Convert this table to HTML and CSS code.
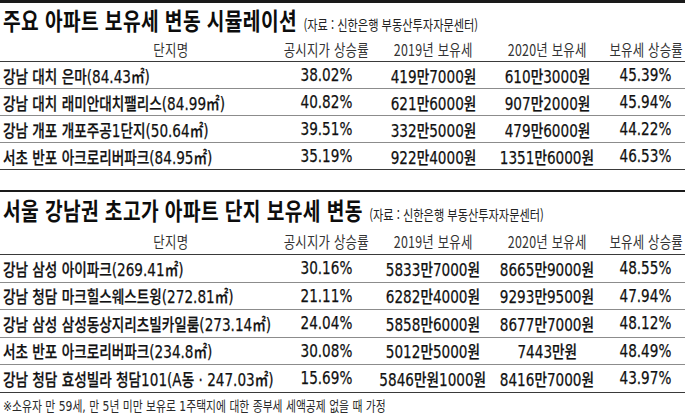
FILE: index.html
```html
<!DOCTYPE html>
<html lang="ko">
<head>
<meta charset="utf-8">
<title>보유세 변동</title>
<link rel="stylesheet" href="styles.css">
</head>
<body>
<div class="page">
  <section class="block block-first">
    <div class="title-row">
      <span class="tx"><h1 class="title">주요 아파트 보유세 변동 시뮬레이션</h1><span class="source">(자료 : 신한은행 부동산투자자문센터)</span></span>
    </div>
    <div class="table">
      <div class="row head">
        <div class="cell name-head"><span class="tx">단지명</span></div>
        <div class="cell"><span class="tx">공시지가 상승률</span></div>
        <div class="cell"><span class="tx">2019년 보유세</span></div>
        <div class="cell"><span class="tx">2020년 보유세</span></div>
        <div class="cell end"><span class="tx">보유세 상승률</span></div>
      </div>
      <div class="row">
        <div class="cell name"><span class="tx">강남 대치 은마(84.43㎡)</span></div>
        <div class="cell"><span class="tx">38.02%</span></div>
        <div class="cell"><span class="tx">419만7000원</span></div>
        <div class="cell"><span class="tx">610만3000원</span></div>
        <div class="cell"><span class="tx">45.39%</span></div>
      </div>
      <div class="row">
        <div class="cell name"><span class="tx">강남 대치 래미안대치팰리스(84.99㎡)</span></div>
        <div class="cell"><span class="tx">40.82%</span></div>
        <div class="cell"><span class="tx">621만6000원</span></div>
        <div class="cell"><span class="tx">907만2000원</span></div>
        <div class="cell"><span class="tx">45.94%</span></div>
      </div>
      <div class="row">
        <div class="cell name"><span class="tx">강남 개포 개포주공1단지(50.64㎡)</span></div>
        <div class="cell"><span class="tx">39.51%</span></div>
        <div class="cell"><span class="tx">332만5000원</span></div>
        <div class="cell"><span class="tx">479만6000원</span></div>
        <div class="cell"><span class="tx">44.22%</span></div>
      </div>
      <div class="row last">
        <div class="cell name"><span class="tx">서초 반포 아크로리버파크(84.95㎡)</span></div>
        <div class="cell"><span class="tx">35.19%</span></div>
        <div class="cell"><span class="tx">922만4000원</span></div>
        <div class="cell"><span class="tx">1351만6000원</span></div>
        <div class="cell"><span class="tx">46.53%</span></div>
      </div>
    </div>
  </section>

  <section class="block block-second">
    <div class="title-row">
      <span class="tx"><h1 class="title">서울 강남권 초고가 아파트 단지 보유세 변동</h1><span class="source">(자료 : 신한은행 부동산투자자문센터)</span></span>
    </div>
    <div class="table table-tall">
      <div class="row head">
        <div class="cell name-head"><span class="tx">단지명</span></div>
        <div class="cell"><span class="tx">공시지가 상승률</span></div>
        <div class="cell"><span class="tx">2019년 보유세</span></div>
        <div class="cell"><span class="tx">2020년 보유세</span></div>
        <div class="cell end"><span class="tx">보유세 상승률</span></div>
      </div>
      <div class="row">
        <div class="cell name"><span class="tx">강남 삼성 아이파크(269.41㎡)</span></div>
        <div class="cell"><span class="tx">30.16%</span></div>
        <div class="cell"><span class="tx">5833만7000원</span></div>
        <div class="cell"><span class="tx">8665만9000원</span></div>
        <div class="cell"><span class="tx">48.55%</span></div>
      </div>
      <div class="row">
        <div class="cell name"><span class="tx">강남 청담 마크힐스웨스트윙(272.81㎡)</span></div>
        <div class="cell"><span class="tx">21.11%</span></div>
        <div class="cell"><span class="tx">6282만4000원</span></div>
        <div class="cell"><span class="tx">9293만9500원</span></div>
        <div class="cell"><span class="tx">47.94%</span></div>
      </div>
      <div class="row">
        <div class="cell name"><span class="tx">강남 삼성 삼성동상지리츠빌카일룸(273.14㎡)</span></div>
        <div class="cell"><span class="tx">24.04%</span></div>
        <div class="cell"><span class="tx">5858만6000원</span></div>
        <div class="cell"><span class="tx">8677만7000원</span></div>
        <div class="cell"><span class="tx">48.12%</span></div>
      </div>
      <div class="row">
        <div class="cell name"><span class="tx">서초 반포 아크로리버파크(234.8㎡)</span></div>
        <div class="cell"><span class="tx">30.08%</span></div>
        <div class="cell"><span class="tx">5012만5000원</span></div>
        <div class="cell"><span class="tx">7443만원</span></div>
        <div class="cell"><span class="tx">48.49%</span></div>
      </div>
      <div class="row last">
        <div class="cell name"><span class="tx">강남 청담 효성빌라 청담101(A동 · 247.03㎡)</span></div>
        <div class="cell"><span class="tx">15.69%</span></div>
        <div class="cell"><span class="tx">5846만원1000원</span></div>
        <div class="cell"><span class="tx">8416만7000원</span></div>
        <div class="cell"><span class="tx">43.97%</span></div>
      </div>
    </div>
  </section>

  <p class="footnote"><span class="tx">※소유자 만 59세, 만 5년 미만 보유로 1주택지에 대한 종부세 세액공제 없을 때 가정</span></p>
</div>
</body>
</html>
```

FILE: styles.css
```css
html, body {
  margin: 0;
  padding: 0;
  background: #fff;
}

.page {
  width: 685px;
  font-family: "DejaVu Sans", "Noto Sans CJK KR", sans-serif;
  color: #111;
}

/* condensed lettering: glyphs squeezed horizontally */
.tx {
  display: inline-block;
  white-space: nowrap;
  transform: scaleX(0.8);
  transform-origin: 50% 50%;
}

.title-row .tx,
.name .tx,
.footnote .tx {
  transform-origin: 0 50%;
}

.cell.end .tx {
  transform-origin: 100% 50%;
}

.block-first {
  border-top: 3px solid #1a1a1a;
}

.block-second {
  margin-top: 20px;
  border-top: 2px solid #1a1a1a;
}

.title-row {
  padding-left: 3px;
  height: 33px;
  line-height: 33px;
}

.block-second .title-row {
  height: 36px;
  line-height: 36px;
}

.title {
  display: inline;
  margin: 0;
  font-family: "Noto Sans CJK KR", sans-serif;
  font-size: 24px;
  font-weight: 700;
  letter-spacing: 0.5px;
  color: #0d0d0d;
}

.source {
  margin-left: 8px;
  font-family: "Noto Sans CJK KR", sans-serif;
  font-size: 14px;
  color: #222;
}

.row {
  display: grid;
  grid-template-columns: 274px 104px 110px 118px 79px;
  height: 26px;
  border-bottom: 1px solid #8c8c8c;
}

.table-tall .row {
  height: 26.5px;
}

.row.head {
  height: 25px;
  border-bottom: 1px solid #3a3a3a;
}

.block-second .row.head {
  height: 26px;
}

.row.last {
  border-bottom: 1px solid #3a3a3a;
}

.cell {
  display: flex;
  align-items: center;
  justify-content: center;
  white-space: nowrap;
  font-size: 17px;
  font-weight: 500;
  -webkit-text-stroke: 0.25px #111;
}

.cell.name {
  justify-content: flex-start;
  padding-left: 3px;
}

.cell.end {
  justify-content: flex-end;
  padding-right: 2px;
}

.row.head .cell {
  font-family: "Noto Sans CJK KR", sans-serif;
  font-size: 15.5px;
  font-weight: 400;
  color: #333;
  letter-spacing: 0.3px;
  -webkit-text-stroke: 0;
}

.row.head .name-head {
  padding-left: 67px;
}

.footnote {
  margin: 0;
  padding: 4px 0 0 3px;
  font-size: 13.5px;
  line-height: 18px;
  color: #2a2a2a;
}
```
